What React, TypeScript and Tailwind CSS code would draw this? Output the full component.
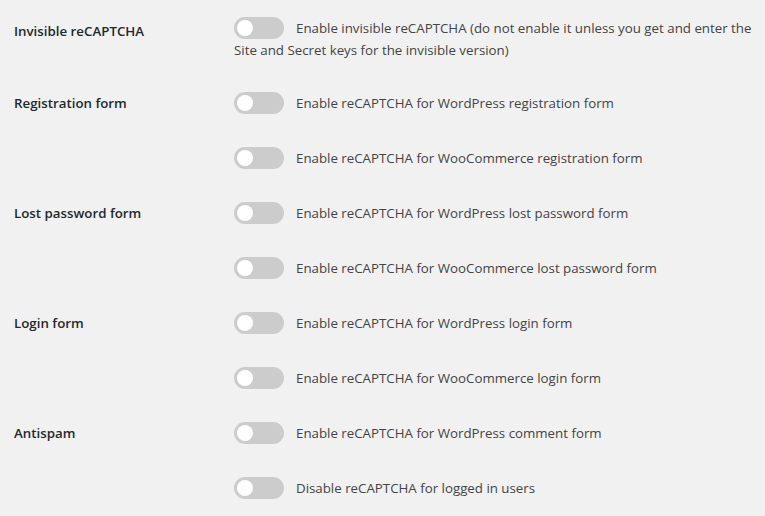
const sections = [
  {
    label: 'Invisible reCAPTCHA',
    options: [
      'Enable invisible reCAPTCHA (do not enable it unless you get and enter the Site and Secret keys for the invisible version)',
    ],
  },
  {
    label: 'Registration form',
    options: [
      'Enable reCAPTCHA for WordPress registration form',
      'Enable reCAPTCHA for WooCommerce registration form',
    ],
  },
  {
    label: 'Lost password form',
    options: [
      'Enable reCAPTCHA for WordPress lost password form',
      'Enable reCAPTCHA for WooCommerce lost password form',
    ],
  },
  {
    label: 'Login form',
    options: [
      'Enable reCAPTCHA for WordPress login form',
      'Enable reCAPTCHA for WooCommerce login form',
    ],
  },
  {
    label: 'Antispam',
    options: [
      'Enable reCAPTCHA for WordPress comment form',
      'Disable reCAPTCHA for logged in users',
    ],
  },
];

function Toggle() {
  return (
    <span className="inline-flex align-middle items-center w-[50px] h-[22px] mr-3 -mt-[3px] rounded-full bg-[#cccccc] px-[3px]">
      <span className="w-[16px] h-[16px] rounded-full bg-white" />
    </span>
  );
}

export default function App() {
  return (
    <div
      className="min-h-screen w-full bg-[#f1f1f1] pl-[14px] pr-[10px] pt-[17px] text-[13.3px] leading-[22px] text-[#444444]"
      style={{ fontFamily: '"Open Sans", "Noto Sans", sans-serif' }}
    >
      <div className="flex flex-col gap-[33px]">
        {sections.map((s, i) => (
          <div key={s.label} className={`flex ${i === 0 ? '-mb-[2px]' : ''}`}>
            <div
              className={`w-[220px] shrink-0 font-semibold text-[#23282d] ${
                i === 0 ? 'pt-[3px]' : ''
              }`}
            >
              {s.label}
            </div>
            <div className="flex-1 flex flex-col gap-[33px]">
              {s.options.map((o) => (
                <label key={o} className="block">
                  <Toggle />
                  {o}
                </label>
              ))}
            </div>
          </div>
        ))}
      </div>
    </div>
  );
}
